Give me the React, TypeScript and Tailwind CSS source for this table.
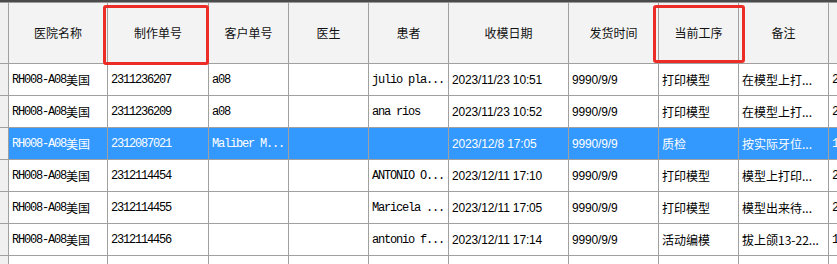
import type { ReactNode } from "react";

type Row = {
  hospital: string;
  orderNo: string;
  clientNo: string;
  doctor: string;
  patient: string;
  received: string;
  shipped: string;
  step: string;
  note: string;
  extra: string;
  selected?: boolean;
};

const rows: Row[] = [
  { hospital: "RH008-A08", orderNo: "2311236207", clientNo: "a08", doctor: "", patient: "julio pla...", received: "2023/11/23 10:51", shipped: "9990/9/9", step: "打印模型", note: "在模型上打...", extra: "2023" },
  { hospital: "RH008-A08", orderNo: "2311236209", clientNo: "a08", doctor: "", patient: "ana rios", received: "2023/11/23 10:52", shipped: "9990/9/9", step: "打印模型", note: "在模型上打...", extra: "2023" },
  { hospital: "RH008-A08", orderNo: "2312087021", clientNo: "Maliber M...", doctor: "", patient: "", received: "2023/12/8 17:05", shipped: "9990/9/9", step: "质检", note: "按实际牙位...", extra: "1202", selected: true },
  { hospital: "RH008-A08", orderNo: "2312114454", clientNo: "", doctor: "", patient: "ANTONIO O...", received: "2023/12/11 17:10", shipped: "9990/9/9", step: "打印模型", note: "模型上打印...", extra: "2023" },
  { hospital: "RH008-A08", orderNo: "2312114455", clientNo: "", doctor: "", patient: "Maricela ...", received: "2023/12/11 17:05", shipped: "9990/9/9", step: "打印模型", note: "模型出来待...", extra: "2023" },
  { hospital: "RH008-A08", orderNo: "2312114456", clientNo: "", doctor: "", patient: "antonio f...", received: "2023/12/11 17:14", shipped: "9990/9/9", step: "活动编模", note: "拔上颌13-22...", extra: "1202" },
];

const headers = ["医院名称", "制作单号", "客户单号", "医生", "患者", "收模日期", "发货时间", "当前工序", "备注", ""];

const grid =
  "grid grid-cols-[9px_99px_101px_80px_80px_80px_120px_90px_80px_90px_60px] w-[889px]";

const mono = "font-['Liberation_Mono','Noto_Sans_CJK_SC',monospace] text-[12px] tracking-[-1.2px]";
const cjk = "font-['Noto_Sans_CJK_SC',sans-serif] text-[12px]";
const sans = "font-['Liberation_Sans',sans-serif] text-[12px] tracking-[-0.15px]";

function Cell({ children, className = "" }: { children?: ReactNode; className?: string }) {
  return (
    <div
      className={`h-8 border-r border-b border-[#a0a0a0] flex items-center pl-[3px] overflow-hidden whitespace-nowrap ${className}`}
    >
      {children}
    </div>
  );
}

export default function App() {
  return (
    <div className="relative w-[837px] h-[264px] overflow-hidden bg-white">
      <div className="h-[2px] bg-[#4a4a4a]" />
      <div className="h-px bg-[#9a9a9a]" />

      {/* header */}
      <div className={`${grid} h-[61px] bg-[#f3f3f3]`}>
        <div className="border-r border-b border-[#a0a0a0] bg-[#f0f0f0]" />
        {headers.map((h, i) => (
          <div
            key={i}
            className={`border-r border-b border-[#a0a0a0] flex items-center justify-center text-[#111] ${cjk}`}
          >
            {h}
          </div>
        ))}
      </div>

      {/* body */}
      {rows.map((r) => {
        const tone = r.selected ? "bg-[#3399ff] text-white" : "bg-white text-black";
        return (
          <div key={r.orderNo} className={grid}>
            <div className="h-8 border-r border-b border-[#a0a0a0] bg-[#f0f0f0]" />
            <Cell className={tone}>
              <span className={mono}>{r.hospital}</span>
              <span className={cjk}>美国</span>
            </Cell>
            <Cell className={`${tone} ${mono}`}>{r.orderNo}</Cell>
            <Cell className={`${tone} ${mono}`}>{r.clientNo}</Cell>
            <Cell className={`${tone} ${mono}`}>{r.doctor}</Cell>
            <Cell className={`${tone} ${mono}`}>{r.patient}</Cell>
            <Cell className={`${tone} ${sans}`}>{r.received}</Cell>
            <Cell className={`${tone} ${sans}`}>{r.shipped}</Cell>
            <Cell className={`${tone} ${cjk}`}>{r.step}</Cell>
            <Cell className={`${tone} ${cjk}`}>{r.note}</Cell>
            <Cell className={`${tone} ${mono}`}>{r.extra}</Cell>
          </div>
        );
      })}
      <div className={grid}>
        <div className="h-8 border-r border-[#a0a0a0] bg-[#f0f0f0]" />
        {headers.map((_, i) => (
          <div key={i} className="h-8 border-r border-[#a0a0a0]" />
        ))}
      </div>

      {/* red highlight frames */}
      <div className="absolute left-[103px] top-[5px] w-[106px] h-[60px] border-[3px] border-[#ec2d27] rounded-[3px]" />
      <div className="absolute left-[653px] top-[5px] w-[92px] h-[58px] border-[3px] border-[#ec2d27] rounded-[3px]" />
    </div>
  );
}
